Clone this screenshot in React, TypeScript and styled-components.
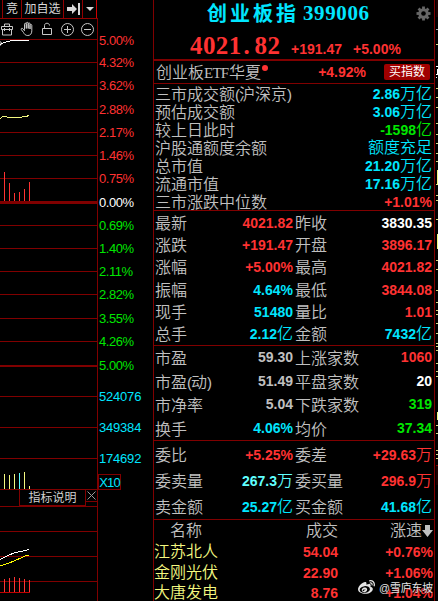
import React from 'react'
import styled, { createGlobalStyle } from 'styled-components'
import { FaWeibo } from 'react-icons/fa'

const RED = '#ff3232'
const CYAN = '#00e6ff'
const GREEN = '#00e600'
const GRAY = '#c0c0c0'
const WHITE = '#ffffff'
const LINE = '#800000'

const GlobalStyle = createGlobalStyle`
  * {
    box-sizing: border-box;
  }
  body {
    margin: 0;
    background: #000000;
    overflow: hidden;
  }
`

const Screen = styled.div`
  position: relative;
  display: grid;
  grid-template-columns: 98px 55px 282px 3px;
  width: 438px;
  height: 601px;
  overflow: hidden;
  background: #000000;
  color: ${GRAY};
  font-family: 'Liberation Sans', 'Noto Sans CJK SC', sans-serif;
`

// left chart column
const ChartColumn = styled.div`
  display: flex;
  flex-direction: column;
  min-width: 0;
  height: 601px;
`
const Toolbar = styled.div`
  display: flex;
  height: 19px;
  padding-left: 2px;
  border-bottom: 1px solid #900000;
`
const ToolButton = styled.div<{ $width: number }>`
  display: flex;
  align-items: center;
  justify-content: center;
  width: ${({ $width }) => $width}px;
  border-left: 1px solid #900000;
  color: #d8d8d8;
  font-size: 12px;
  line-height: 18px;
  white-space: nowrap;
  &:last-child {
    border-right: 1px solid #d00000;
  }
`
const IconBar = styled.div`
  display: flex;
  align-items: center;
  gap: 6px;
  height: 20px;
  border-right: 1px solid ${LINE};
  svg {
    flex: none;
    fill: none;
    stroke: #c8c8c8;
  }
`
const Plot = styled.svg`
  display: block;
  flex: none;
`
const TabRow = styled.div`
  display: flex;
  align-items: flex-start;
  height: 16px;
  padding-left: 19px;
  border-right: 1px solid ${LINE};
`
const Tab = styled.div`
  width: 67px;
  height: 16px;
  border: solid ${LINE};
  border-width: 0 1px 1px;
  color: #d0d0d0;
  font-size: 12px;
  line-height: 17px;
  text-align: center;
`
const TabClose = styled.div`
  display: flex;
  align-items: center;
  justify-content: center;
  width: 11px;
  height: 12px;
  border-bottom: 1px solid ${LINE};
`

// percent / volume scale
const Axis = styled.div`
  padding-top: 33px;
`
const AxisLabel = styled.div<{ $height: number; $color: string; $tight?: boolean }>`
  height: ${({ $height }) => $height}px;
  padding-left: 1px;
  color: ${({ $color }) => $color};
  font-size: 13px;
  line-height: 16px;
  letter-spacing: ${({ $tight }) => ($tight ? '-0.45px' : '-0.2px')};
`
const AxisUnit = styled.div`
  width: 23px;
  height: 16px;
  margin-top: -1px;
  border: 1px solid ${LINE};
  color: ${CYAN};
  font-size: 13px;
  line-height: 15px;
  letter-spacing: -0.8px;
  text-align: center;
`

// quote panel
const Panel = styled.div`
  height: 601px;
  border: solid ${LINE};
  border-width: 0 1px;
`
const Header = styled.div`
  height: 61px;
  border-bottom: 2px solid ${LINE};
`
const TitleRow = styled.div`
  display: flex;
  align-items: center;
  height: 26px;
  padding: 0 3px 0 53px;
  color: ${CYAN};
  font-weight: 700;
`
const Title = styled.span`
  width: 96px;
  font-family: 'Noto Sans CJK SC', sans-serif;
  font-size: 20px;
  line-height: 26px;
  letter-spacing: 3px;
  white-space: nowrap;
`
const Code = styled.span`
  margin-right: auto;
  font-family: 'Liberation Serif', serif;
  font-size: 21px;
  line-height: 26px;
  letter-spacing: 0.6px;
`
const PriceRow = styled.div`
  display: flex;
  align-items: baseline;
  height: 33px;
  padding: 5px 0 0 36px;
  color: ${RED};
  font-size: 14px;
  font-weight: 700;
  line-height: 30px;
`
const Price = styled.span`
  width: 101px;
  font-family: 'Liberation Serif', serif;
  font-size: 25px;
  letter-spacing: 0.4px;
  i {
    display: inline-block;
    width: 13px;
    padding-left: 2px;
    font-style: normal;
  }
`
const Change = styled.span`
  width: 62px;
`
const FundRow = styled.div`
  display: flex;
  align-items: center;
  height: 23px;
  padding: 0 4px 0 2px;
  border-bottom: 1px solid ${LINE};
  font-size: 16px;
  line-height: 22px;
  white-space: nowrap;
`
const FundName = styled.span`
  padding-top: 1px;
  font-weight: 350;
`
const Latin = styled.span`
  display: inline-block;
  width: 25px;
  font-family: 'Liberation Serif', serif;
  font-size: 15px;
  letter-spacing: -0.8px;
`
const Dot = styled.i`
  width: 6px;
  height: 6px;
  margin: -8px auto 0 1px;
  border-radius: 3px;
  background: ${RED};
`
const BuyButton = styled.span`
  width: 46px;
  height: 16px;
  margin-left: 18px;
  border-radius: 2px;
  background: #a00000;
  color: #ffffff;
  font-size: 12px;
  line-height: 17px;
  text-align: center;
`
const Section = styled.div<{ $height: number; $top?: number }>`
  height: ${({ $height }) => $height}px;
  padding-top: ${({ $top = 0 }) => $top}px;
  border-bottom: 1px solid ${LINE};
`
const Row = styled.div<{ $height: number; $split?: boolean }>`
  display: grid;
  grid-template-columns: ${({ $split }) => ($split ? '140px 139px' : '279px')};
  height: ${({ $height }) => $height}px;
  line-height: ${({ $height }) => $height}px;
`
const Cell = styled.div`
  display: flex;
  justify-content: space-between;
  padding: 0 1px;
  white-space: nowrap;
`
const Label = styled.span`
  padding-top: 1px;
  color: ${GRAY};
  font-size: 16px;
  font-weight: 350;
`
const Paren = styled.span`
  font-size: 15px;
  letter-spacing: -1px;
`
const Value = styled.span<{ $color: string }>`
  color: ${({ $color }) => $color};
  font-size: 14px;
  font-weight: 700;
`
const Unit = styled.span`
  font-size: 16px;
  font-weight: 350;
`
const StockRow = styled.div<{ $head?: boolean }>`
  display: grid;
  grid-template-columns: ${({ $head }) => ($head ? '78px 90px 95px' : '94px 90px 95px')};
  height: 20.75px;
  padding-left: ${({ $head }) => ($head ? 16 : 0)}px;
  color: ${({ $head }) => ($head ? GRAY : '#f4f880')};
  font-size: 16px;
  font-weight: 350;
  line-height: 22.5px;
  white-space: nowrap;
`
const RightCell = styled.span`
  display: flex;
  align-items: center;
  justify-content: flex-end;
`
const Watermark = styled.div`
  position: absolute;
  left: 358px;
  top: 578px;
  display: flex;
  align-items: center;
  gap: 4px;
  height: 18px;
  color: #e4e4e4;
  font-size: 10.8px;
  text-shadow: 0 0 2px #000000;
  white-space: nowrap;
`

const scale: [string, number, string][] = [
  ['5.00%', 22, RED],
  ['4.32%', 23, RED],
  ['3.62%', 24, RED],
  ['2.88%', 23, RED],
  ['2.17%', 23, RED],
  ['1.46%', 23, RED],
  ['0.75%', 24, RED],
  ['0.00%', 23, WHITE],
  ['0.69%', 23, GREEN],
  ['1.40%', 23, GREEN],
  ['2.11%', 23, GREEN],
  ['2.82%', 24, GREEN],
  ['3.55%', 23, GREEN],
  ['4.26%', 24, GREEN],
  ['5.00%', 31, GREEN],
  ['524076', 31, CYAN],
  ['349384', 31, CYAN],
  ['174692', 24, CYAN],
]

const market: [string, string, string][] = [
  ['三市成交额(沪深京)', '2.86万亿', CYAN],
  ['预估成交额', '3.06万亿', CYAN],
  ['较上日此时', '-1598亿', GREEN],
  ['沪股通额度余额', '额度充足', CYAN],
  ['总市值', '21.20万亿', CYAN],
  ['流通市值', '17.16万亿', CYAN],
  ['三市涨跌中位数', '+1.01%', RED],
]

type Pair = [string, string, string, string, string, string]

const quotes: Pair[] = [
  ['最新', '4021.82', RED, '昨收', '3830.35', WHITE],
  ['涨跌', '+191.47', RED, '开盘', '3896.17', RED],
  ['涨幅', '+5.00%', RED, '最高', '4021.82', RED],
  ['振幅', '4.64%', CYAN, '最低', '3844.08', RED],
  ['现手', '51480', CYAN, '量比', '1.01', RED],
  ['总手', '2.12亿', CYAN, '金额', '7432亿', CYAN],
]
const ratios: Pair[] = [
  ['市盈', '59.30', GRAY, '上涨家数', '1060', RED],
  ['市盈(动)', '51.49', GRAY, '平盘家数', '20', WHITE],
  ['市净率', '5.04', GRAY, '下跌家数', '319', GREEN],
  ['换手', '4.06%', CYAN, '均价', '37.34', GREEN],
]
const orders: Pair[] = [
  ['委比', '+5.25%', RED, '委差', '+29.63万', RED],
  ['委卖量', '267.3万', '#60ffff', '委买量', '296.9万', RED],
  ['卖金额', '25.27亿', CYAN, '买金额', '41.68亿', CYAN],
]
const stocks = [
  ['江苏北人', '54.04', '+0.76%'],
  ['金刚光伏', '22.90', '+1.06%'],
  ['大唐发电', '8.76', '+1.04%'],
]

const barX = [4, 9, 14, 19, 24, 29]

interface BarsProps {
  tops: number[]
  bottom: number
  colors: string[]
}
const Bars = ({ tops, bottom, colors }: BarsProps) => (
  <>
    {tops.map((top, i) => (
      <rect
        key={i}
        x={barX[i]}
        y={top}
        width={1}
        height={bottom - top}
        fill={colors[i % colors.length]}
      />
    ))}
  </>
)

const Name = ({ text }: { text: string }) => (
  <Label>
    {text.split(/([()])/).map((part, i) =>
      part === '(' || part === ')' ? <Paren key={i}>{part}</Paren> : part
    )}
  </Label>
)

const Figure = ({ text, color }: { text: string; color: string }) => {
  const number = text.replace(/[^\d.+%-]/g, '')
  const unit = text.slice(number.length)
  return (
    <Value $color={color}>
      {number}
      {unit && <Unit>{unit}</Unit>}
    </Value>
  )
}

const PairRows = ({ rows, height }: { rows: Pair[]; height: number }) => (
  <>
    {rows.map(([label, value, color, label2, value2, color2]) => (
      <Row key={label} $height={height} $split>
        <Cell>
          <Name text={label} />
          <Figure text={value} color={color} />
        </Cell>
        <Cell>
          <Name text={label2} />
          <Figure text={value2} color={color2} />
        </Cell>
      </Row>
    ))}
  </>
)

const Gear = () => (
  <svg width="15" height="15" viewBox="-7.5 -7.5 15 15">
    {[0, 45, 90, 135].map((a) => (
      <rect key={a} x="-1.4" y="-7" width="2.8" height="14" fill="#666" transform={`rotate(${a})`} />
    ))}
    <circle r="5.2" fill="#666" />
    <circle r="2.3" fill="#000" />
  </svg>
)

const Tools = () => (
  <IconBar>
    <svg width="14" height="16" viewBox="0 0 14 16">
      <path d="M1.5 5.5h11v3h-11zM2.5 8.5v5.500h9V8.500M4.500 5.500v-2.500h5v2.500M4.500 7v3M9.500 7v3" />
    </svg>
    <svg width="14" height="16" viewBox="0 0 14 16">
      <path d="M4.5 8.5V3.2c0-1.3 1.8-1.3 1.8 0V7.5 2.3c0-1.3 1.9-1.3 1.9 0V7.5 2.8c0-1.2 1.8-1.2 1.8 0V8 4.3c0-1.2 1.8-1.2 1.8 0v5.5c0 3-1.5 4.7-4 4.7-2.3 0-3.4-1.2-4.3-3L1.3 8.7c-.7-1.2.8-2 1.6-1l1.6 2z" />
    </svg>
    <svg width="14" height="16" viewBox="0 0 14 16">
      <path d="M2.5 7.5h9v6h-9zM4.5 7.5v-3c0-3 5-3 5 0" />
    </svg>
    <svg width="14" height="16" viewBox="0 0 14 16">
      <circle cx="7.5" cy="8.5" r="6" />
      <path d="M4 8.5h7M7.5 5v7" />
    </svg>
    <svg width="14" height="16" viewBox="0 0 14 16">
      <circle cx="7.5" cy="8.5" r="6" />
      <path d="M4 8.5h7" />
    </svg>
  </IconBar>
)

const gridLines = [39, 62, 85, 109, 132, 155, 178, 225, 248, 271, 294, 318, 341, 396, 427, 458, 489]

const MainPlot = () => (
  <Plot width="98" height="451" viewBox="0 39 98 451" shapeRendering="crispEdges">
    {gridLines.map((y) => (
      <rect key={y} y={y} width="98" height="1" fill={LINE} />
    ))}
    <rect y="201" width="98" height="3" fill={LINE} />
    <rect y="365" width="98" height="2" fill={LINE} />
    <rect x="97" y="39" width="1" height="451" fill={LINE} />
    <path d="M0 41l3 2l-3 4z" fill="#777" />
    <path d="M0 44.5L4 42.5L8 41.5L12 40.5H29" fill="none" stroke="#fff" />
    <path d="M0 118.5L3 116.5H6L8 117.5H21L23 116.5H26L29 115.5" fill="none" stroke="#f4f880" />
    <Bars tops={[172, 183, 193, 192, 189, 182]} bottom={201} colors={[RED]} />
    <Bars
      tops={[474, 475, 474, 473, 472, 486]}
      bottom={489}
      colors={['#f4f880', '#f4f880', '#f4f880', '#60ffff', '#f4f880', '#f4f880']}
    />
  </Plot>
)

const IndicatorPlot = () => (
  <Plot width="98" height="95" viewBox="0 506 98 95" shapeRendering="crispEdges">
    {[506, 531, 556, 581].map((y) => (
      <rect key={y} y={y} width="98" height="1" fill={LINE} />
    ))}
    <rect x="97" y="506" width="1" height="95" fill={LINE} />
    <path d="M0 559.5L8 555.5L15 552.5L21 551.5L25 550.5L29 549.5" fill="none" stroke="#fff" />
    <path d="M0 566L8 563.5L15 560.5L22 557.5L26 555.5H29" fill="none" stroke="#ffff00" />
    <rect y="592" width="30" height="1" fill="#c00000" />
    <Bars tops={[579, 578, 577, 578, 579, 580]} bottom={592} colors={[RED]} />
  </Plot>
)

// sliver of the neighbouring window's scale
const ticks = [44, 88, 97, 107, 123, 134, 143, 153, 161, 184, 195, 200, 219, 260, 269, 290, 302, 310, 314, 323, 333, 343, 346, 350, 363, 371, 376, 425, 433, 450, 454, 458]

const EdgeStrip = () => (
  <Plot width="3" height="601" viewBox="0 0 3 601" shapeRendering="crispEdges">
    <rect x="1" y="0" width="2" height="17" fill="#1c0000" />
    <rect x="1" y="29" width="2" height="1" fill="#aaa" />
    <path d="M1 66h2v1h-2zM2 69h1v5h-1zM1 74h2v1h-2zM1 77h1v1h-1z" fill="#fff" />
    {ticks.map((y) => (
      <rect key={y} x="1" y={y} width="2" height="1" fill="#d8d880" />
    ))}
    <path d="M2 170h1v15h-1zM2 234h1v15h-1zM2 412h1v8h-1z" fill="#f4f880" />
    <rect x="1" y="465" width="2" height="1" fill={LINE} />
    <rect x="1" y="466" width="2" height="19" fill="#1c0000" />
  </Plot>
)

const App = () => (
  <>
    <GlobalStyle />
    <Screen>
      <ChartColumn>
        <Toolbar>
          <ToolButton $width={19}>竞</ToolButton>
          <ToolButton $width={42}>加自选</ToolButton>
          <ToolButton $width={19}>
            <svg width="13" height="12" viewBox="0 0 13 12" fill="#d8d8d8">
              <path d="M0 4h5V1l5 5l-5 5V8H0zM11 0h2v12h-2z" />
            </svg>
          </ToolButton>
          <ToolButton $width={15}>
            <svg width="8" height="4" viewBox="0 0 8 4" fill="#d8d8d8">
              <path d="M0 0h8L4 4z" />
            </svg>
          </ToolButton>
        </Toolbar>
        <Tools />
        <MainPlot />
        <TabRow>
          <Tab>指标说明</Tab>
          <TabClose>
            <svg width="9" height="9" viewBox="0 0 9 9" stroke="#999">
              <path d="M.5 .5l8 8M8.5 .5l-8 8" />
            </svg>
          </TabClose>
        </TabRow>
        <IndicatorPlot />
      </ChartColumn>

      <Axis>
        {scale.map(([text, height, color], i) => (
          <AxisLabel key={i} $height={height} $color={color} $tight={text.endsWith('%')}>
            {text}
          </AxisLabel>
        ))}
        <AxisUnit>X10</AxisUnit>
      </Axis>

      <Panel>
        <Header>
          <TitleRow>
            <Title>创业板指</Title>
            <Code>399006</Code>
            <Gear />
          </TitleRow>
          <PriceRow>
            <Price>
              4021<i>.</i>82
            </Price>
            <Change>+191.47</Change>
            <span>+5.00%</span>
          </PriceRow>
        </Header>
        <FundRow>
          <FundName>
            创业板<Latin>ETF</Latin>华夏
          </FundName>
          <Dot />
          <Figure text="+4.92%" color={RED} />
          <BuyButton>买指数</BuyButton>
        </FundRow>
        <Section $height={127} $top={1}>
          {market.map(([label, value, color]) => (
            <Row key={label} $height={18}>
              <Cell>
                <Name text={label} />
                <Figure text={value} color={color} />
              </Cell>
            </Row>
          ))}
        </Section>
        <Section $height={135} $top={1}>
          <PairRows rows={quotes} height={22.2} />
        </Section>
        <Section $height={95}>
          <PairRows rows={ratios} height={23.6} />
        </Section>
        <Section $height={79} $top={1}>
          <PairRows rows={orders} height={26} />
        </Section>
        <StockRow $head>
          <span>名称</span>
          <RightCell>成交</RightCell>
          <RightCell>
            涨速
            <svg width="11" height="12" viewBox="0 0 11 12" fill={GRAY}>
              <path d="M3 0h5v5h3L5.5 12L0 5h3z" />
            </svg>
          </RightCell>
        </StockRow>
        {stocks.map(([name, price, speed]) => (
          <StockRow key={name}>
            <span>{name}</span>
            <RightCell>
              <Figure text={price} color={RED} />
            </RightCell>
            <RightCell>
              <Figure text={speed} color={RED} />
            </RightCell>
          </StockRow>
        ))}
      </Panel>
      <EdgeStrip />
      <Watermark>
        <FaWeibo size={17} />
        @雪庐东坡
      </Watermark>
    </Screen>
  </>
)

export default App
